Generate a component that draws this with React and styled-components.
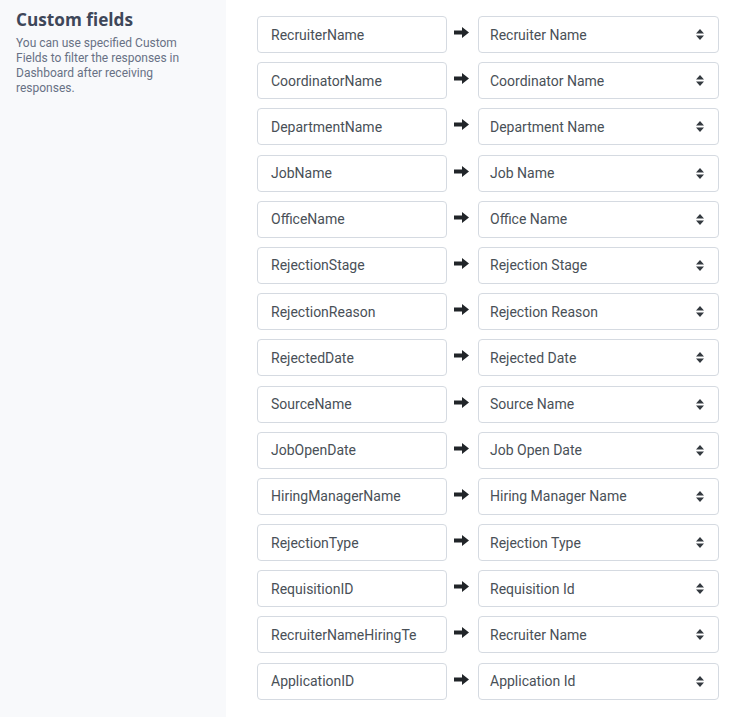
import React from 'react';
import styled, { createGlobalStyle } from 'styled-components';

const fields = [
  ['RecruiterName', 'Recruiter Name'],
  ['CoordinatorName', 'Coordinator Name'],
  ['DepartmentName', 'Department Name'],
  ['JobName', 'Job Name'],
  ['OfficeName', 'Office Name'],
  ['RejectionStage', 'Rejection Stage'],
  ['RejectionReason', 'Rejection Reason'],
  ['RejectedDate', 'Rejected Date'],
  ['SourceName', 'Source Name'],
  ['JobOpenDate', 'Job Open Date'],
  ['HiringManagerName', 'Hiring Manager Name'],
  ['RejectionType', 'Rejection Type'],
  ['RequisitionID', 'Requisition Id'],
  ['RecruiterNameHiringTe', 'Recruiter Name'],
  ['ApplicationID', 'Application Id'],
];

const GlobalStyle = createGlobalStyle`
  html, body {
    margin: 0;
    padding: 0;
    background: #fff;
    font-family: Roboto, "Liberation Sans", sans-serif;
  }
`;

export default function App() {
  return (
    <>
      <GlobalStyle />
      <Page>
        <Sidebar>
          <Title>Custom fields</Title>
          <Description>
            You can use specified Custom Fields to filter the responses in Dashboard after receiving
            responses.
          </Description>
        </Sidebar>
        <Main>
          {fields.map(([key, label], i) => (
            <Row key={i}>
              <FieldInput defaultValue={key} readOnly />
              <Arrow>
                <svg width="15" height="11" viewBox="0 0 15 11">
                  <path d="M0 3.5h8V0l7 5.5-7 5.5V7.5H0z" fill="#212529" />
                </svg>
              </Arrow>
              <SelectBox>
                <span>{label}</span>
                <svg width="8" height="11" viewBox="0 0 8 11">
                  <path d="M4 0l4 4.5H0z M4 11l4-4.5H0z" fill="#343a40" />
                </svg>
              </SelectBox>
            </Row>
          ))}
        </Main>
      </Page>
    </>
  );
}

const Page = styled.div`
  display: flex;
  min-height: 717px;
`;

const Sidebar = styled.aside`
  width: 226px;
  flex-shrink: 0;
  background: #f8f9fb;
  padding: 9px 16px;
  box-sizing: border-box;
`;

const Title = styled.h2`
  margin: 0 0 5px;
  font-family: "Open Sans", "Liberation Sans", sans-serif;
  font-weight: 700;
  font-size: 17.2px;
  line-height: 22px;
  color: #3e4759;
`;

const Description = styled.p`
  margin: 0;
  font-size: 12px;
  line-height: 15px;
  color: #687185;
  padding-right: 8px;
`;

const Main = styled.main`
  padding: 16px 0 0 31px;
  display: flex;
  flex-direction: column;
  gap: 9.2px;
`;

const Row = styled.div`
  display: flex;
  align-items: flex-start;
  height: 37px;
`;

const FieldInput = styled.input`
  width: 190px;
  height: 37px;
  box-sizing: border-box;
  border: 1px solid #d5dae1;
  border-radius: 4px;
  padding: 0 12px 0 13px;
  font-family: Roboto, "Liberation Sans", sans-serif;
  font-size: 14px;
  color: #495057;
  background: #fff;
  outline: none;
`;

const Arrow = styled.div`
  width: 31px;
  display: flex;
  justify-content: flex-start;
  padding-top: 11px;
  padding-left: 7px;
  box-sizing: border-box;
`;

const SelectBox = styled.div`
  width: 241px;
  height: 37px;
  box-sizing: border-box;
  border: 1px solid #d5dae1;
  border-radius: 4px;
  padding: 0 14px 0 11px;
  display: flex;
  align-items: center;
  justify-content: space-between;
  font-size: 14px;
  color: #495057;
  background: #fff;
`;
